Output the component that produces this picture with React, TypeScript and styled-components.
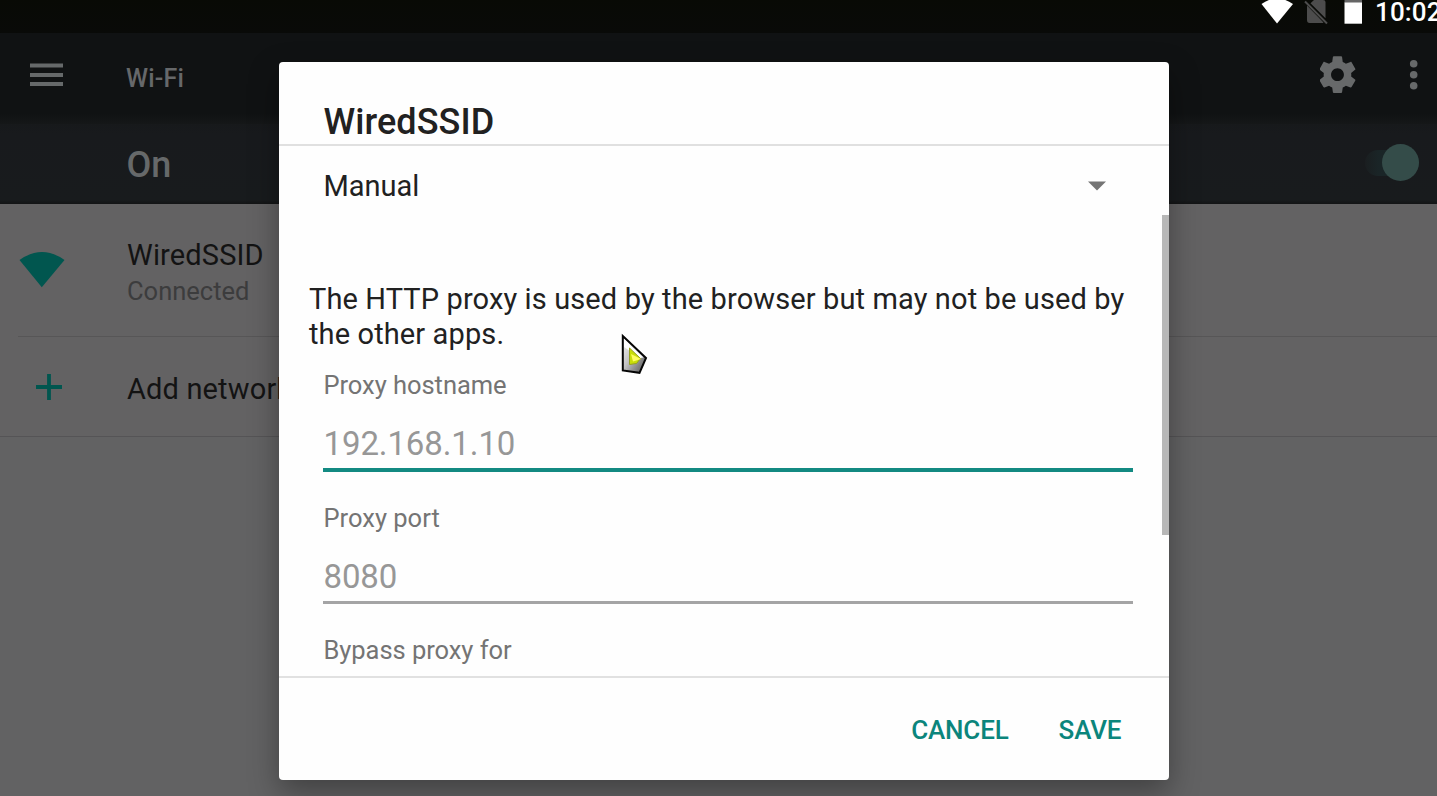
import React from "react";
import styled, { createGlobalStyle } from "styled-components";

const Global = createGlobalStyle`
  * { box-sizing: border-box; }
  html, body { margin: 0; padding: 0; overflow: hidden; background: #626263; }
  body { font-family: Roboto, "Liberation Sans", sans-serif; }
`;

const Screen = styled.div`
  position: relative;
  width: 1437px;
  height: 796px;
  overflow: hidden;
  display: flex;
  flex-direction: column;
  background: #626263;
`;

const Label = styled.span<{ $size: number; $line: number; $color: string; $weight?: number; $track?: number }>`
  display: block;
  white-space: nowrap;
  font-size: ${(p) => p.$size}px;
  line-height: ${(p) => p.$line}px;
  color: ${(p) => p.$color};
  font-weight: ${(p) => p.$weight ?? 400};
  letter-spacing: ${(p) => p.$track ?? 0}px;
`;

const StatusBar = styled.header`
  height: 33px;
  display: flex;
  justify-content: flex-end;
  align-items: flex-start;
  background: linear-gradient(#080a05, #090a08);
  flex: none;
`;

const StatusIcons = styled.svg`
  display: block;
  flex: none;
`;

const Clock = styled.div`
  width: 62px;
  margin-top: -1px;
`;

const AppBar = styled.div`
  height: 91px;
  flex: none;
  display: flex;
  align-items: flex-start;
  background: linear-gradient(#101213 0, #101213 80px, #151718 91px);
  padding: 22px 0 0 29.5px;
`;

const MenuIcon = styled.svg`
  margin-top: 8px;
  margin-right: 63.5px;
`;

const AppTitle = styled.div`
  padding-top: 1.5px;
`;

const AppActions = styled.div`
  display: flex;
  margin-left: auto;
`;

const SwitchBar = styled.div`
  height: 80px;
  flex: none;
  display: flex;
  align-items: flex-start;
  justify-content: space-between;
  background: linear-gradient(#17191b 0, #181a1d 10px, #181b1d 76px, #131415 80px);
  padding: 0 18.5px 0 126.5px;
`;

const SwitchLabel = styled.div`
  padding-top: 1px;
`;

const Toggle = styled.div`
  display: flex;
  align-items: center;
  width: 54px;
  height: 26px;
  margin-top: 25.5px;
  justify-content: flex-end;
  border-radius: 13px;
  background: linear-gradient(90deg, #1a1e20, #1a2527 14px, #1a2728);
`;

const Knob = styled.span`
  width: 37px;
  height: 37px;
  flex: none;
  border-radius: 50%;
  background: #344c49;
`;

const Network = styled.div<{ $height: number }>`
  height: ${(p) => p.$height}px;
  flex: none;
  display: flex;
  align-items: flex-start;
  background: #636263;
`;

const NetworkIcon = styled.div<{ $left: number; $top: number }>`
  width: 127px;
  flex: none;
  padding: ${(p) => p.$top}px 0 0 ${(p) => p.$left}px;
  svg { display: block; }
`;

const NetworkText = styled.div<{ $top: number }>`
  padding-top: ${(p) => p.$top}px;
`;

const Rule = styled.div<{ $inset?: number; $color: string; $size: number }>`
  height: ${(p) => p.$size}px;
  flex: none;
  background: linear-gradient(${(p) => p.$color}, ${(p) => p.$color}) ${(p) => p.$inset ?? 0}px 0 no-repeat #636263;
`;

const Dialog = styled.section`
  position: absolute;
  left: 279.4px;
  top: 62px;
  width: 890px;
  height: 718px;
  display: flex;
  flex-direction: column;
  border-radius: 4px;
  background: #fefefe;
  box-shadow: 0 12px 30px rgba(0, 0, 0, 0.34);
`;

const DialogHeader = styled.div`
  height: 84px;
  flex: none;
  padding: 38px 44px 0;
  border-bottom: 2px solid #e0e0e0;
`;

const DialogBody = styled.div`
  flex: 1;
  display: flex;
  min-height: 0;
`;

const Form = styled.div`
  flex: 1;
  display: flex;
  flex-direction: column;
  padding: 20px 28.9px 0 44.1px;
`;

const Select = styled.div`
  display: flex;
  justify-content: space-between;
  align-items: center;
  height: 40px;
  padding-right: 27px;
`;

const Notice = styled.p`
  margin: 76px 0 0 -14.5px;
  color: #212121;
  font-size: 29px;
  line-height: 35px;
  letter-spacing: 0.12px;
  white-space: nowrap;
`;

const Field = styled.div<{ $top: number }>`
  margin-top: ${(p) => p.$top}px;
`;

const Input = styled.div<{ $focus?: boolean }>`
  width: 810px;
  height: ${(p) => (p.$focus ? 49 : 48)}px;
  margin-top: 21px;
  margin-left: -0.5px;
  padding-left: 0.5px;
  border-bottom: ${(p) => (p.$focus ? "4px solid #138a82" : "3px solid #a4a4a5")};
`;

const ScrollTrack = styled.div`
  width: 8px;
  padding-top: 69px;
`;

const ScrollThumb = styled.div`
  height: 320px;
  background: #b7b7b7;
`;

const Actions = styled.footer`
  height: 104px;
  flex: none;
  display: flex;
  justify-content: flex-end;
  gap: 50px;
  padding: 35px 48px 0 0;
  border-top: 2px solid #e1e1e1;
`;

const Button = styled.button`
  height: 34px;
  padding: 0;
  border: 0;
  background: none;
  color: #0b857c;
  font: 500 26px/34px Roboto, sans-serif;
  letter-spacing: -0.15px;
`;

const Cursor = styled.svg`
  position: absolute;
  left: 618px;
  top: 330px;
`;

export default function App() {
  return (
    <Screen>
      <Global />
      <StatusBar>
        <StatusIcons width="114" height="33" viewBox="1261 0 114 33">
          <path d="M1261.500 4Q1277-7 1293 4L1277 23.500Z" fill="#fff" />
          <path d="M1314 0H1323Q1325.500 0 1325.500 2V18.300L1310.500 3.300ZM1307 5.500 1323.500 22.500Q1323 23 1322 23H1309.500Q1307 23 1307 20Z" fill="#4c4c4c" />
          <path d="M1305 1.500 1327 23.500" stroke="#4c4c4c" strokeWidth="2" />
          <path d="M1344.500 0H1362V3H1344.500Z" fill="#666" />
          <path d="M1344.500 2.500H1362V23.700H1344.500Z" fill="#fff" />
        </StatusIcons>
        <Clock>
          <Label $size={26} $line={26} $color="#fff" $weight={500} $track={0.15}>10:02</Label>
        </Clock>
      </StatusBar>

      <AppBar>
        <MenuIcon width="33" height="24" viewBox="0 0 33 24">
          <path d="M0 2.500H33M0 12H33M0 21H33" stroke="#66696a" strokeWidth="3.800" />
        </MenuIcon>
        <AppTitle>
          <Label $size={25} $line={44} $color="#66686a" $weight={500} $track={0.2}>Wi-Fi</Label>
        </AppTitle>
        <AppActions>
          <svg width="117" height="44" viewBox="1320 55 117 44">
            <path
              transform="translate(1315.400 52.600) scale(1.84)"
              fill="#67696a"
              d="M19.43 12.98c.04-.32.07-.64.07-.98s-.03-.66-.07-.98l2.110-1.650c.19-.15.24-.42.12-.64l-2-3.460c-.12-.22-.39-.3-.61-.22l-2.490 1c-.52-.4-1.080-.73-1.690-.98l-.38-2.650C14.460 2.180 14.250 2 14 2h-4c-.25 0-.46.18-.49.42l-.38 2.650c-.61.25-1.170.59-1.690.98l-2.490-1c-.23-.09-.49 0-.61.22l-2 3.460c-.13.22-.07.49.12.64l2.110 1.650c-.04.32-.07.65-.07.98s.03.66.07.98l-2.110 1.650c-.19.15-.24.42-.12.64l2 3.460c.12.22.39.3.61.22l2.490-1c.52.4 1.080.73 1.690.98l.38 2.650c.03.24.24.42.49.42h4c.25 0 .46-.18.49-.42l.38-2.650c.61-.25 1.170-.59 1.690-.98l2.490 1c.23.09.49 0 .61-.22l2-3.460c.12-.22.07-.49-.12-.64l-2.110-1.650zM12 15.500c-1.930 0-3.500-1.570-3.500-3.500s1.570-3.500 3.500-3.500 3.500 1.570 3.500 3.500-1.570 3.500-3.500 3.500z"
            />
            <circle cx="1413.700" cy="63.800" r="3.800" fill="#67696a" />
            <circle cx="1413.700" cy="74.800" r="3.800" fill="#67696a" />
            <circle cx="1413.700" cy="85.800" r="3.800" fill="#67696a" />
          </svg>
        </AppActions>
      </AppBar>

      <SwitchBar>
        <SwitchLabel>
          <Label $size={36} $line={80} $color="#66696a" $weight={500}>On</Label>
        </SwitchLabel>
        <Toggle><Knob /></Toggle>
      </SwitchBar>

      <Network $height={132}>
        <NetworkIcon $left={19} $top={47}>
          <svg width="46" height="37" viewBox="0 0 46 37">
            <path d="M.500 9Q23-7 45.500 9L22.800 36.300Z" fill="#01564f" />
          </svg>
        </NetworkIcon>
        <NetworkText $top={31}>
          <Label $size={29} $line={40} $color="#131313" $track={0.15}>WiredSSID</Label>
          <Label $size={25.500} $line={32} $color="#3c3c3d">Connected</Label>
        </NetworkText>
      </Network>
      <Rule $inset={18} $size={1} $color="#575657" />
      <Network $height={99}>
        <NetworkIcon $left={36} $top={37}>
          <svg width="26" height="26" viewBox="0 0 26 26">
            <path d="M13 0V26M0 13H26" stroke="#01564f" strokeWidth="3.800" />
          </svg>
        </NetworkIcon>
        <NetworkText $top={32}>
          <Label $size={29} $line={40} $color="#131313" $track={0.15}>Add network</Label>
        </NetworkText>
      </Network>
      <Rule $size={1} $color="#555456" />

      <Dialog>
        <DialogHeader>
          <Label $size={36} $line={44} $color="#212121" $weight={500} $track={0.1}>WiredSSID</Label>
        </DialogHeader>
        <DialogBody>
          <Form>
            <Select>
              <Label $size={29} $line={40} $color="#212121">Manual</Label>
              <svg width="18" height="10" viewBox="0 0 18 10">
                <path d="M0 .500H18L9 9.500Z" fill="#757575" />
              </svg>
            </Select>
            <Notice>
              The HTTP proxy is used by the browser but may not be used by
              <br />
              the other apps.
            </Notice>
            <Field $top={16}>
              <Label $size={25.500} $line={34} $color="#747474" $track={-0.05}>Proxy hostname</Label>
              <Input $focus>
                <Label $size={33} $line={42} $color="#979797" $track={-0.1}>192.168.1.10</Label>
              </Input>
            </Field>
            <Field $top={29}>
              <Label $size={25.500} $line={34} $color="#747474">Proxy port</Label>
              <Input>
                <Label $size={33} $line={42} $color="#979797" $track={-0.15}>8080</Label>
              </Input>
            </Field>
            <Field $top={29}>
              <Label $size={25.500} $line={34} $color="#747474" $track={-0.05}>Bypass proxy for</Label>
            </Field>
          </Form>
          <ScrollTrack><ScrollThumb /></ScrollTrack>
        </DialogBody>
        <Actions>
          <Button>CANCEL</Button>
          <Button>SAVE</Button>
        </Actions>
      </Dialog>

      <Cursor width="34" height="48" viewBox="0 0 34 48">
        <defs>
          <linearGradient id="metal" x1="0" y1="0" x2="1" y2="1">
            <stop offset="0" stopColor="#f8f8f8" />
            <stop offset="0.45" stopColor="#c4c4c4" />
            <stop offset="1" stopColor="#4c4c4c" />
          </linearGradient>
        </defs>
        <path d="M4.800 6 28 28 21.500 42.800 4.800 40.500Z" fill="url(#metal)" stroke="#050505" strokeWidth="2" />
        <path d="M6 9 25.500 27.500 22 28 6 17Z" fill="#fff" />
        <path d="M11.500 18 22.500 28.500 18.500 33.500 11.500 34.500Z" fill="#c9de08" stroke="#95a020" />
        <path d="M13 24 23 29 15 31.500Z" fill="#ffff60" />
      </Cursor>
    </Screen>
  );
}
